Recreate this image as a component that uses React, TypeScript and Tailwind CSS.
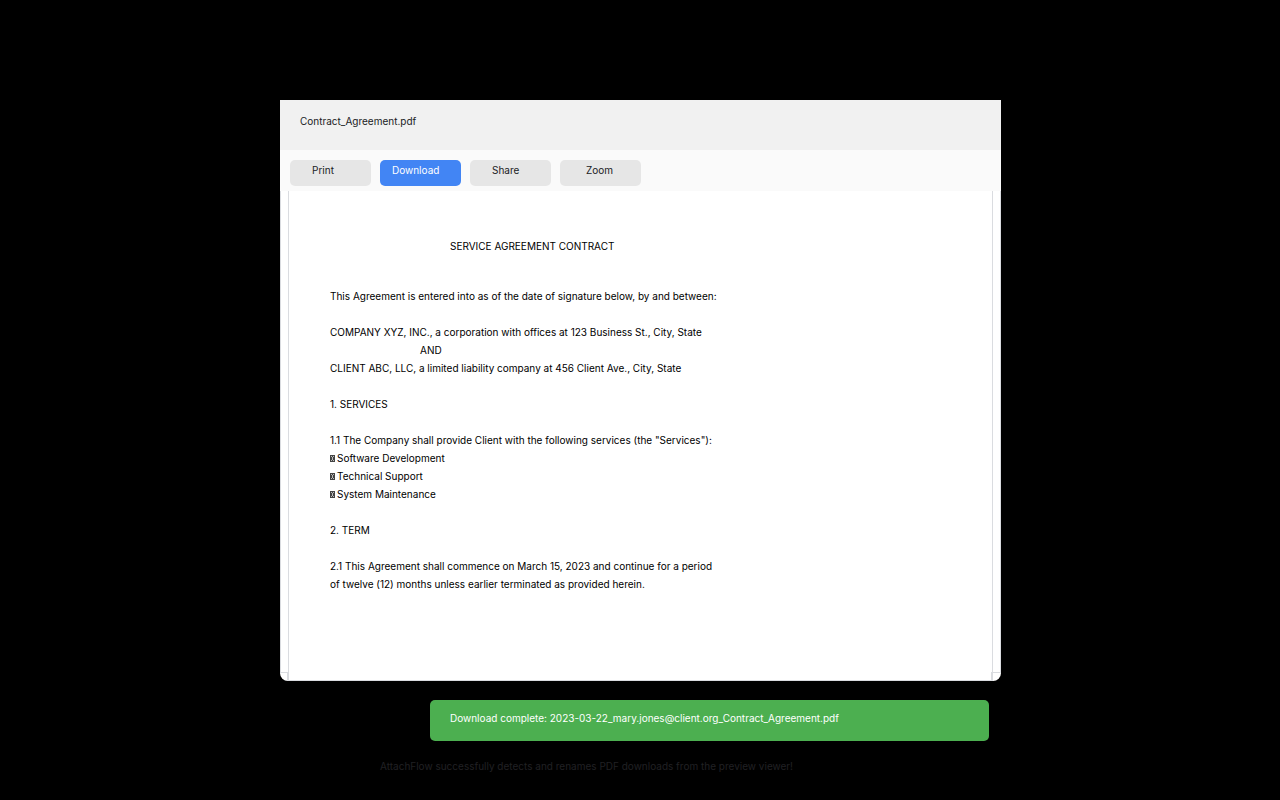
import React from "react";

const actions = [
  { label: "Print", className: "bg-[#e6e6e6] text-[#202124] pl-[22px]" },
  { label: "Download", className: "bg-[#4285f4] text-white pl-3" },
  { label: "Share", className: "bg-[#e6e6e6] text-[#202124] pl-[22px]" },
  { label: "Zoom", className: "bg-[#e6e6e6] text-[#202124] pl-[26px]" },
];

const services = ["Software Development", "Technical Support", "System Maintenance"];

function Bullet() {
  return (
    <svg width="5" height="7" viewBox="0 0 5 7" aria-hidden="true" shapeRendering="crispEdges">
      <rect width="5" height="7" fill="#444" />
      <path d="M1 1h1v1H1zM3 1h1v1H3zM2 2h1v3H2zM1 5h1v1H1zM3 5h1v1H3z" fill="#bbb" />
    </svg>
  );
}

function Gutter({ side }: { side: "left" | "right" }) {
  const left = side === "left";
  return (
    <div className="flex w-2 shrink-0 flex-col">
      <div className={left ? "grow border-l border-[#dadce0]" : "grow border-r border-[#dadce0]"} />
      <div
        className={
          left
            ? "h-[9px] border-t border-r border-[#dadce0]"
            : "-ml-[2px] h-[9px] border-t border-l border-[#dadce0]"
        }
      />
    </div>
  );
}

export default function App() {
  return (
    <div className="flex min-h-screen justify-center bg-black pt-[100px] pl-px font-[Inter,Arial,sans-serif] text-[10px] leading-[18px] text-black">
      <div className="w-full max-w-[721px]">
        <main className="overflow-hidden rounded-b-lg bg-white">
          <header className="h-[50px] bg-[#f1f1f1] px-5 pt-3 text-[#202124]">
            <h1>Contract_Agreement.pdf</h1>
          </header>
          <div className="flex gap-[9px] bg-[#fafafa] px-[10px] pt-[10px] pb-[5px]">
            {actions.map((action) => (
              <button
                key={action.label}
                type="button"
                className={`flex h-[26px] w-[81px] items-start rounded-[5px] pt-px ${action.className}`}
              >
                {action.label}
              </button>
            ))}
          </div>
          <div className="flex">
            <Gutter side="left" />
            <article className="min-h-[490px] grow border-x border-b border-[#dadce0] px-[41px] pt-[46px] pb-[86px]">
              <h2 className="pl-[120px]">SERVICE AGREEMENT CONTRACT</h2>
              <p className="mt-8">
                This Agreement is entered into as of the date of signature below, by and between:
              </p>
              <div className="mt-[18px]">
                <p>COMPANY XYZ, INC., a corporation with offices at 123 Business St., City, State</p>
                <p className="pl-[90px]">AND</p>
                <p>CLIENT ABC, LLC, a limited liability company at 456 Client Ave., City, State</p>
              </div>
              <h3 className="mt-[18px]">1. SERVICES</h3>
              <p className="mt-[18px]">
                1.1 The Company shall provide Client with the following services (the "Services"):
              </p>
              <ul>
                {services.map((service) => (
                  <li key={service} className="flex items-center gap-[2px]">
                    <Bullet />
                    {service}
                  </li>
                ))}
              </ul>
              <h3 className="mt-[18px]">2. TERM</h3>
              <p className="mt-[18px]">
                2.1 This Agreement shall commence on March 15, 2023 and continue for a period
                <br />
                of twelve (12) months unless earlier terminated as provided herein.
              </p>
            </article>
            <Gutter side="right" />
          </div>
        </main>
        <div
          role="status"
          className="mt-[19px] mr-3 ml-[150px] h-[41px] rounded-[5px] bg-[#4caf50] px-5 pt-[9px] text-white"
        >
          Download complete: 2023-03-22_mary.jones@client.org_Contract_Agreement.pdf
        </div>
        <p className="mt-4 pl-[100px] text-[#202124]">
          AttachFlow successfully detects and renames PDF downloads from the preview viewer!
        </p>
      </div>
    </div>
  );
}
